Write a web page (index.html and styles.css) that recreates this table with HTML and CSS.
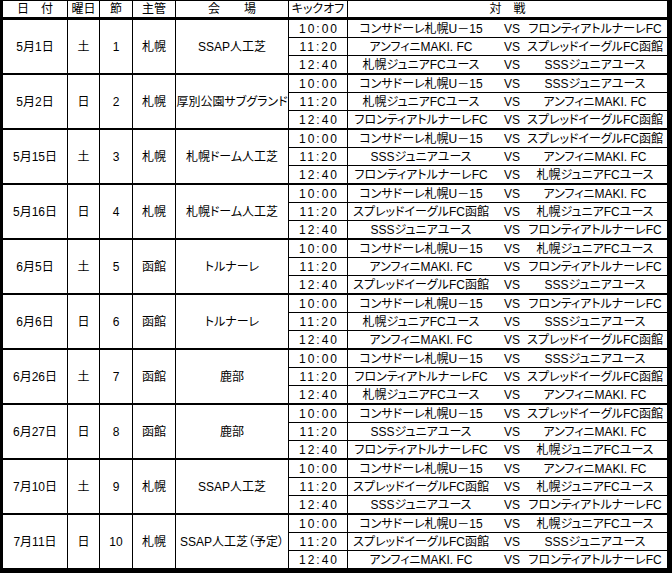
FILE: index.html
```html
<!DOCTYPE html>
<html lang="ja">
<head>
<meta charset="utf-8">
<title>日程表</title>
<link rel="stylesheet" href="styles.css">
</head>
<body>
<div class="sheet">
  <div class="grid head">
    <div class="c">日　付</div>
    <div class="c">曜日</div>
    <div class="c">節</div>
    <div class="c">主管</div>
    <div class="c">会　　場</div>
    <div class="c">キックオフ</div>
    <div class="c">対　戦</div>
  </div>

  <div class="grid group">
    <div class="c s3">5月1日</div><div class="c s3">土</div><div class="c s3">1</div><div class="c s3">札幌</div><div class="c s3">SSAP人工芝</div>
    <div class="c t">10:00</div><div class="c m"><span class="h">コンサドーレ札幌U－15</span><span class="v">VS</span><span class="a">フロンティアトルナーレFC</span></div>
    <div class="c t">11:20</div><div class="c m"><span class="h">アンフィニMAKI. FC</span><span class="v">VS</span><span class="a">スプレッドイーグルFC函館</span></div>
    <div class="c t">12:40</div><div class="c m"><span class="h">札幌ジュニアFCユース</span><span class="v">VS</span><span class="a">SSSジュニアユース</span></div>
  </div>

  <div class="grid group">
    <div class="c s3">5月2日</div><div class="c s3">日</div><div class="c s3">2</div><div class="c s3">札幌</div><div class="c s3">厚別公園サブグランド</div>
    <div class="c t">10:00</div><div class="c m"><span class="h">コンサドーレ札幌U－15</span><span class="v">VS</span><span class="a">SSSジュニアユース</span></div>
    <div class="c t">11:20</div><div class="c m"><span class="h">札幌ジュニアFCユース</span><span class="v">VS</span><span class="a">アンフィニMAKI. FC</span></div>
    <div class="c t">12:40</div><div class="c m"><span class="h">フロンティアトルナーレFC</span><span class="v">VS</span><span class="a">スプレッドイーグルFC函館</span></div>
  </div>

  <div class="grid group">
    <div class="c s3">5月15日</div><div class="c s3">土</div><div class="c s3">3</div><div class="c s3">札幌</div><div class="c s3">札幌ドーム人工芝</div>
    <div class="c t">10:00</div><div class="c m"><span class="h">コンサドーレ札幌U－15</span><span class="v">VS</span><span class="a">スプレッドイーグルFC函館</span></div>
    <div class="c t">11:20</div><div class="c m"><span class="h">SSSジュニアユース</span><span class="v">VS</span><span class="a">アンフィニMAKI. FC</span></div>
    <div class="c t">12:40</div><div class="c m"><span class="h">フロンティアトルナーレFC</span><span class="v">VS</span><span class="a">札幌ジュニアFCユース</span></div>
  </div>

  <div class="grid group">
    <div class="c s3">5月16日</div><div class="c s3">日</div><div class="c s3">4</div><div class="c s3">札幌</div><div class="c s3">札幌ドーム人工芝</div>
    <div class="c t">10:00</div><div class="c m"><span class="h">コンサドーレ札幌U－15</span><span class="v">VS</span><span class="a">アンフィニMAKI. FC</span></div>
    <div class="c t">11:20</div><div class="c m"><span class="h">スプレッドイーグルFC函館</span><span class="v">VS</span><span class="a">札幌ジュニアFCユース</span></div>
    <div class="c t">12:40</div><div class="c m"><span class="h">SSSジュニアユース</span><span class="v">VS</span><span class="a">フロンティアトルナーレFC</span></div>
  </div>

  <div class="grid group">
    <div class="c s3">6月5日</div><div class="c s3">土</div><div class="c s3">5</div><div class="c s3">函館</div><div class="c s3">トルナーレ</div>
    <div class="c t">10:00</div><div class="c m"><span class="h">コンサドーレ札幌U－15</span><span class="v">VS</span><span class="a">札幌ジュニアFCユース</span></div>
    <div class="c t">11:20</div><div class="c m"><span class="h">アンフィニMAKI. FC</span><span class="v">VS</span><span class="a">フロンティアトルナーレFC</span></div>
    <div class="c t">12:40</div><div class="c m"><span class="h">スプレッドイーグルFC函館</span><span class="v">VS</span><span class="a">SSSジュニアユース</span></div>
  </div>

  <div class="grid group">
    <div class="c s3">6月6日</div><div class="c s3">日</div><div class="c s3">6</div><div class="c s3">函館</div><div class="c s3">トルナーレ</div>
    <div class="c t">10:00</div><div class="c m"><span class="h">コンサドーレ札幌U－15</span><span class="v">VS</span><span class="a">フロンティアトルナーレFC</span></div>
    <div class="c t">11:20</div><div class="c m"><span class="h">札幌ジュニアFCユース</span><span class="v">VS</span><span class="a">SSSジュニアユース</span></div>
    <div class="c t">12:40</div><div class="c m"><span class="h">アンフィニMAKI. FC</span><span class="v">VS</span><span class="a">スプレッドイーグルFC函館</span></div>
  </div>

  <div class="grid group">
    <div class="c s3">6月26日</div><div class="c s3">土</div><div class="c s3">7</div><div class="c s3">函館</div><div class="c s3">鹿部</div>
    <div class="c t">10:00</div><div class="c m"><span class="h">コンサドーレ札幌U－15</span><span class="v">VS</span><span class="a">SSSジュニアユース</span></div>
    <div class="c t">11:20</div><div class="c m"><span class="h">フロンティアトルナーレFC</span><span class="v">VS</span><span class="a">スプレッドイーグルFC函館</span></div>
    <div class="c t">12:40</div><div class="c m"><span class="h">札幌ジュニアFCユース</span><span class="v">VS</span><span class="a">アンフィニMAKI. FC</span></div>
  </div>

  <div class="grid group">
    <div class="c s3">6月27日</div><div class="c s3">日</div><div class="c s3">8</div><div class="c s3">函館</div><div class="c s3">鹿部</div>
    <div class="c t">10:00</div><div class="c m"><span class="h">コンサドーレ札幌U－15</span><span class="v">VS</span><span class="a">スプレッドイーグルFC函館</span></div>
    <div class="c t">11:20</div><div class="c m"><span class="h">SSSジュニアユース</span><span class="v">VS</span><span class="a">アンフィニMAKI. FC</span></div>
    <div class="c t">12:40</div><div class="c m"><span class="h">フロンティアトルナーレFC</span><span class="v">VS</span><span class="a">札幌ジュニアFCユース</span></div>
  </div>

  <div class="grid group">
    <div class="c s3">7月10日</div><div class="c s3">土</div><div class="c s3">9</div><div class="c s3">札幌</div><div class="c s3">SSAP人工芝</div>
    <div class="c t">10:00</div><div class="c m"><span class="h">コンサドーレ札幌U－15</span><span class="v">VS</span><span class="a">アンフィニMAKI. FC</span></div>
    <div class="c t">11:20</div><div class="c m"><span class="h">スプレッドイーグルFC函館</span><span class="v">VS</span><span class="a">札幌ジュニアFCユース</span></div>
    <div class="c t">12:40</div><div class="c m"><span class="h">SSSジュニアユース</span><span class="v">VS</span><span class="a">フロンティアトルナーレFC</span></div>
  </div>

  <div class="grid group">
    <div class="c s3">7月11日</div><div class="c s3">日</div><div class="c s3">10</div><div class="c s3">札幌</div><div class="c s3">SSAP人工芝（予定）</div>
    <div class="c t">10:00</div><div class="c m"><span class="h">コンサドーレ札幌U－15</span><span class="v">VS</span><span class="a">札幌ジュニアFCユース</span></div>
    <div class="c t">11:20</div><div class="c m"><span class="h">スプレッドイーグルFC函館</span><span class="v">VS</span><span class="a">SSSジュニアユース</span></div>
    <div class="c t">12:40</div><div class="c m"><span class="h">アンフィニMAKI. FC</span><span class="v">VS</span><span class="a">フロンティアトルナーレFC</span></div>
  </div>
</div>
</body>
</html>
```

FILE: styles.css
```css
html, body {
  margin: 0;
  padding: 0;
  background: #fff;
}

body {
  font-family: "Liberation Sans", "Noto Sans CJK JP", sans-serif;
  font-size: 12px;
  line-height: 1;
  color: #000;
  font-feature-settings: "palt";
}

.sheet {
  width: 672px;
  height: 573px;
  box-sizing: border-box;
  background: #000;
  padding: 1px 5px 5px 3px;
  display: flex;
  flex-direction: column;
  gap: 2px;
}

.grid {
  display: grid;
  grid-template-columns: 64px 31px 32px 42px 112px 58px 319px;
  gap: 1px;
}

.head {
  grid-template-rows: 16px;
  margin-bottom: 1px;
}

.group {
  grid-template-rows: 17px 17px 17px;
}

.c {
  background: #fff;
  display: flex;
  align-items: center;
  justify-content: center;
  white-space: nowrap;
  overflow: visible;
}

.s3 {
  grid-row: span 3;
}

.t {
  letter-spacing: 2px;
  padding-left: 2px;
}

.m {
  justify-content: flex-start;
}

.h {
  width: 146px;
  flex: none;
  display: flex;
  justify-content: center;
}

.v {
  width: 36px;
  flex: none;
  display: flex;
  justify-content: center;
}

.a {
  width: 130px;
  flex: none;
  display: flex;
  justify-content: center;
}
```
